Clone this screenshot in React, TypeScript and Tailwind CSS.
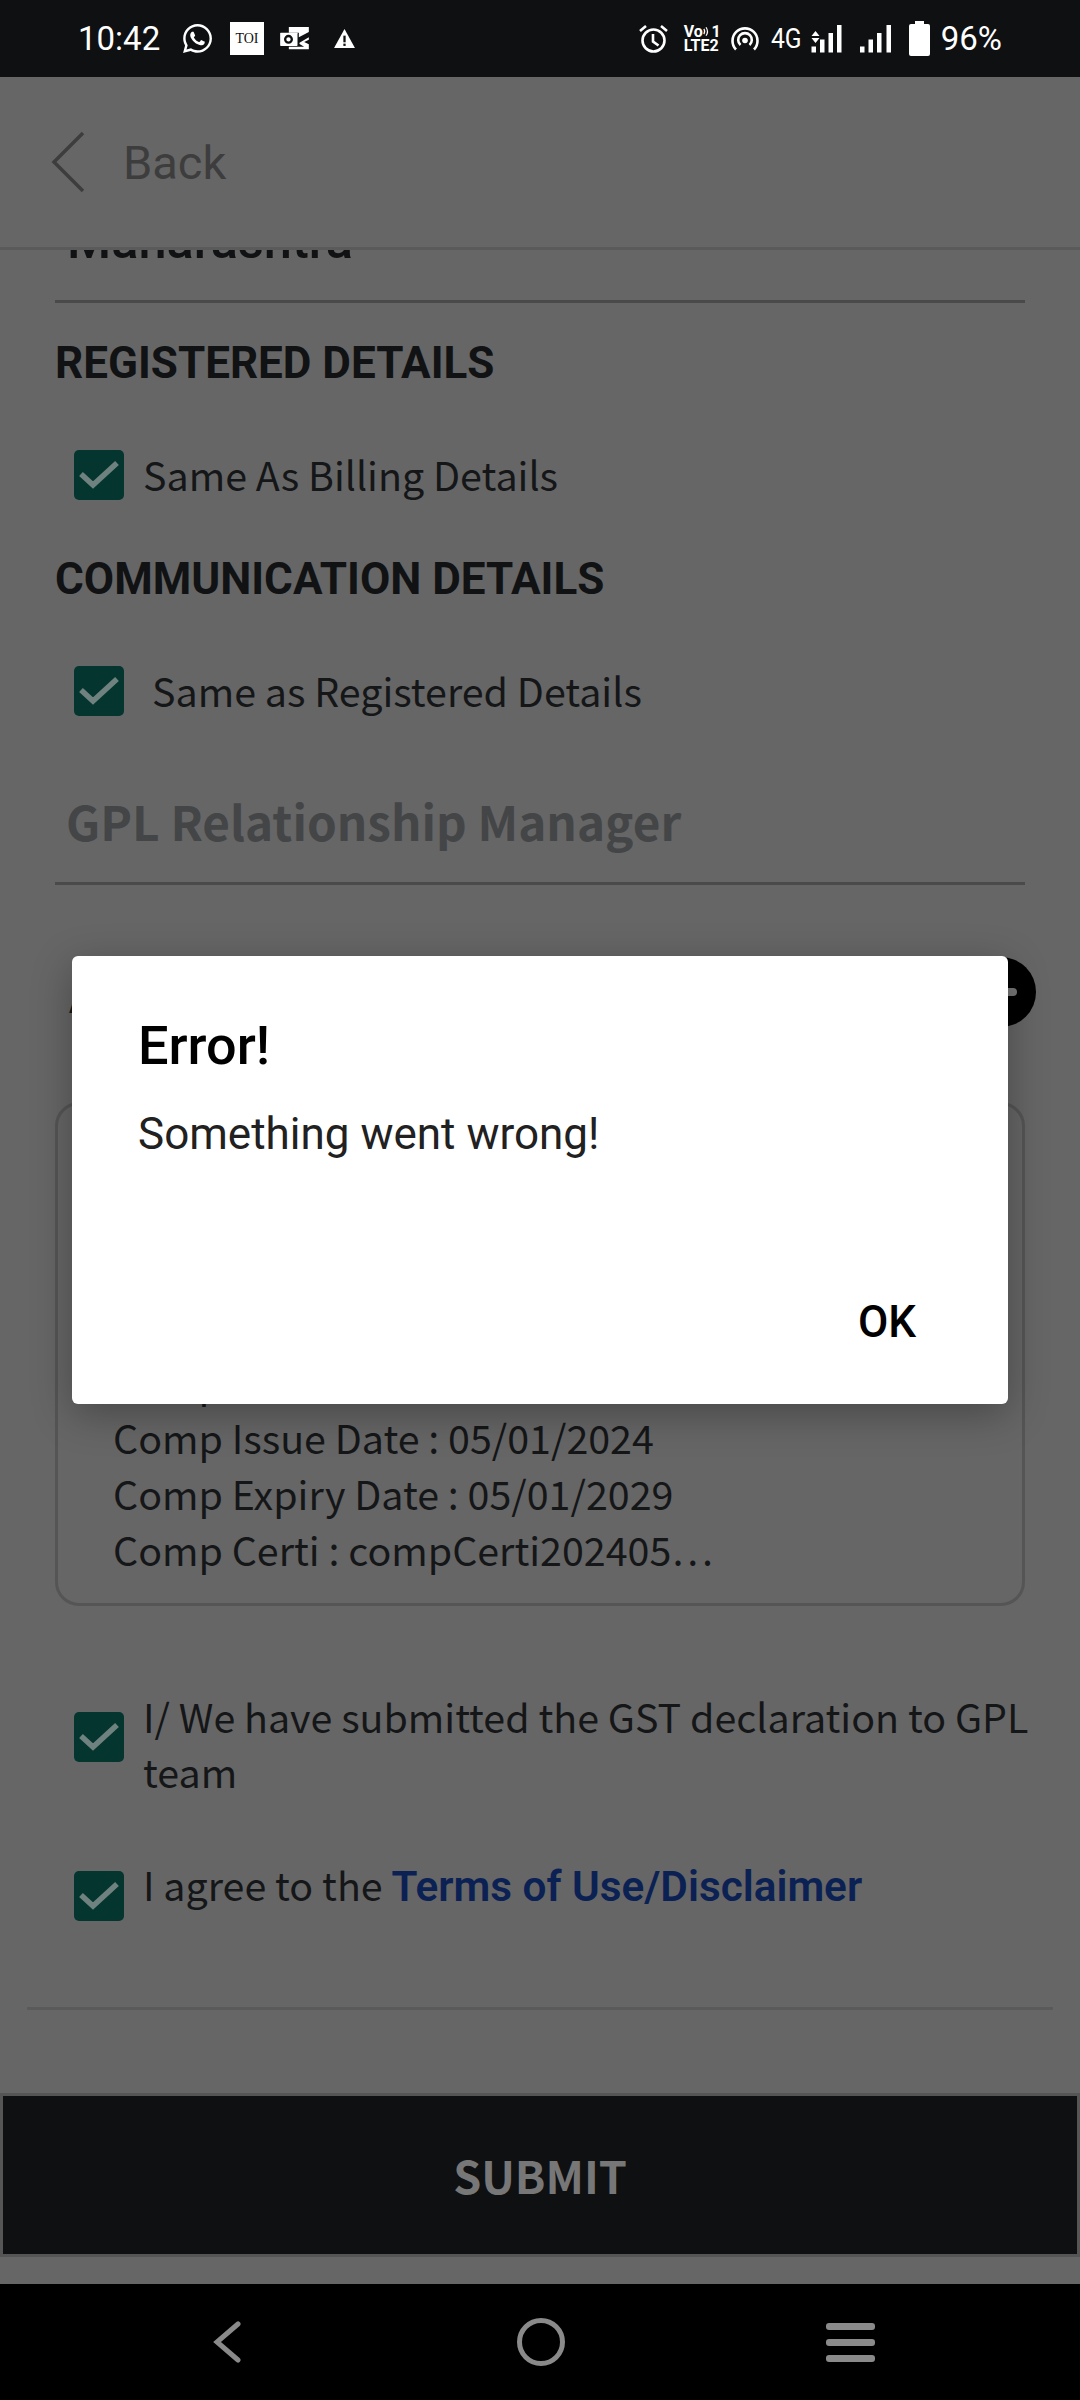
import React from "react";
import { FaWhatsapp } from "react-icons/fa";

const cjk = "font-['Noto_Sans_CJK_SC','Noto_Sans',sans-serif]";
const roboto = "font-['Roboto',sans-serif]";

const Checkbox: React.FC<{ className?: string }> = ({ className = "" }) => (
  <div className={`w-[50px] h-[50px] shrink-0 rounded-[5px] bg-[#04352f] ${className}`}>
    <svg viewBox="0 0 50 50" className="w-[50px] h-[50px]" fill="none" stroke="#6f827f" strokeWidth="5.5">
      <path d="M7 24 L19 35 L43 13" />
    </svg>
  </div>
);

const SignalBars: React.FC<{ arrows?: boolean }> = ({ arrows }) => (
  <svg viewBox="0 0 32 28" className="w-[32px] h-[28px]" fill="white">
    {arrows && <path d="M1.5 11 L5.5 6 L9.5 11 Z M1.5 13 H9.5 L5.5 18 Z" />}
    <rect x={arrows ? 1.5 : 0} y="21.5" width="4.5" height="6" />
    <rect x={arrows ? 10 : 8.5} y="14.5" width="4.5" height="13" />
    <rect x={arrows ? 18.5 : 17} y="8" width="4.5" height="19.5" />
    <rect x={arrows ? 27 : 26.5} y="0" width="4.5" height="27.5" />
  </svg>
);

const StatusBar = () => (
  <div className={`h-[77px] bg-[#0f1012] flex items-center justify-between pl-[78px] pr-[78px] text-white ${roboto}`}>
    <div className="flex items-center">
      <span className="w-[103px] text-[33px] leading-none">10:42</span>
      <FaWhatsapp className="w-[33px] h-[33px] mr-[16px]" />
      <div className="w-[34px] h-[33px] bg-white text-[#111] text-[14px] font-['Liberation_Serif',serif] flex items-center justify-center mr-[16px]">TOI</div>
      <svg viewBox="0 0 95 75" className="w-[32px] h-[25px] mr-[22px]" fill="white">
        <path d="M26 3 H86 V18 L56 34 V20 H26 Z" />
        <path d="M58 50 L86 34 V41 L72 48 L86 55 V70 H26 V62 H72 L58 54 Z" />
        <rect x="0" y="20" width="52" height="40" rx="2" />
        <circle cx="25" cy="40" r="10" fill="none" stroke="#0f1012" strokeWidth="7" />
      </svg>
      <svg viewBox="0 0 22 20" className="w-[21px] h-[19px]" fill="white">
        <path d="M11 0 L22 20 H0 Z" />
        <rect x="9.8" y="7" width="2.4" height="7" fill="#0f1012" />
        <rect x="9.8" y="15.4" width="2.4" height="2.4" fill="#0f1012" />
      </svg>
    </div>
    <div className="flex items-center">
      <svg viewBox="0 0 29 29" className="w-[29px] h-[29px] mr-[16px]" fill="none" stroke="white" strokeWidth="2.6">
        <circle cx="14.5" cy="16.5" r="11" />
        <path d="M14 10 V17.5 L19.5 21.5" />
        <path d="M1 7 L7 2 M28 7 L22 2" />
      </svg>
      <div className="w-[37px] h-[27px] mr-[10px] flex flex-col justify-between text-[16px] leading-[13px] font-bold">
        <div className="flex items-center">
          <span>Vo</span>
          <svg viewBox="0 0 9 14" className="w-[8px] h-[13px] mr-[1px]" fill="none" stroke="white" strokeWidth="1.4">
            <path d="M1 4 Q3 7 1 10 M3.5 2 Q7 7 3.5 12" />
          </svg>
          <span>1</span>
        </div>
        <span>LTE2</span>
      </div>
      <svg viewBox="0 0 28 24" className="w-[28px] h-[24px] mr-[12px]" fill="none" stroke="white" strokeWidth="2.6">
        <path d="M5 22.5 A12.5 12.5 0 1 1 23 22.5" />
        <path d="M9.5 18 A6.8 6.8 0 1 1 18.5 18" />
        <circle cx="14" cy="13.5" r="2.8" fill="white" stroke="none" />
      </svg>
      <span className="w-[30px] mr-[9px] text-[28px] leading-none scale-x-[0.88] origin-left">4G</span>
      <SignalBars arrows />
      <div className="w-[18px]" />
      <SignalBars />
      <div className="w-[17px]" />
      <svg viewBox="0 0 21 35" className="w-[21px] h-[35px] mr-[11px]" fill="white">
        <path d="M6 0 H15 V3 H19 A2 2 0 0 1 21 5 V33 A2 2 0 0 1 19 35 H2 A2 2 0 0 1 0 33 V5 A2 2 0 0 1 2 3 H6 Z" />
      </svg>
      <span className="text-[33px] leading-none">96%</span>
    </div>
  </div>
);

const Content = () => (
  <div className="relative h-[1790px] overflow-hidden">
    {/* page scrolled, first row is cut by the header */}
    <div className="px-[55px]">
      <div className="flex h-[53px] border-b-[3px] border-[#4a4a4a] pl-[12px]">
        <div className={`-mt-[35px] text-[50.5px] leading-[52px] font-medium text-[#111214] ${roboto}`}>Maharashtra</div>
      </div>
      <h2 className={`mt-[35px] text-[44px] leading-[50px] font-bold text-[#111214] ${roboto}`}>REGISTERED DETAILS</h2>
      <div className="mt-[62px] ml-[19px] flex items-center gap-[19px]">
        <Checkbox />
        <span className={`-mt-[3px] text-[39.4px] leading-[50px] text-[#151618] ${cjk}`}>Same As Billing Details</span>
      </div>
      <h2 className={`mt-[54px] text-[44px] leading-[50px] font-bold text-[#111214] ${roboto}`}>COMMUNICATION DETAILS</h2>
      <div className="mt-[62px] ml-[19px] flex items-center gap-[28px]">
        <Checkbox />
        <span className={`-mt-[3px] text-[39.4px] leading-[50px] text-[#151618] ${cjk}`}>Same as Registered Details</span>
      </div>
      <div className="mt-[72px] h-[97px] border-b-[3px] border-[#4a4a4a] pl-[11px]">
        <span className={`relative -top-[2px] text-[47.7px] leading-[70px] font-semibold text-[#444547] ${cjk}`}>GPL Relationship Manager</span>
      </div>
      <div className="relative mt-[72px] h-[100px] pl-[14px] pt-[4px]">
        <span className={`text-[39.4px] leading-[70px] text-[#151618] ${cjk}`}>Attach</span>
        <div className="absolute right-[-11px] top-0 w-[70px] h-[70px] rounded-full bg-black">
          <div className="absolute right-[19px] top-[31px] w-[24px] h-[8px] rounded-full bg-[#777]" />
        </div>
      </div>
      <div className={`mt-[45px] h-[504px] rounded-[24px] border-[3px] border-[#555555] pl-[55px] pb-[26px] flex flex-col justify-end text-[39.4px] leading-[56px] text-[#151618] ${cjk}`}>
        <div>Comp No : 2024</div>
        <div>Comp Issue Date : 05/01/2024</div>
        <div>Comp Expiry Date : 05/01/2029</div>
        <div>Comp Certi : compCerti202405…</div>
      </div>
    </div>
    <div className={`mt-[85px] pl-[74px] pr-[4px] text-[39.4px] leading-[55px] text-[#151618] ${cjk}`}>
      <div className="flex gap-[19px]">
        <Checkbox className="mt-[21px]" />
        <span className="-mt-[3px]">I/ We have submitted the GST declaration to GPL team</span>
      </div>
      <div className="mt-[61px] flex gap-[19px]">
        <Checkbox className="mt-[12px]" />
        <span className="-mt-[3px]">
          I agree to the <span className={`text-[42.3px] font-semibold text-[#0b2154] ${roboto}`}>Terms of Use/Disclaimer</span>
        </span>
      </div>
    </div>
    <div className="mx-[27px] mt-[86px] h-[3px] bg-[#5a5a5a]" />
  </div>
);

export default function App() {
  return (
    <div className="relative w-[1080px] h-[2400px] overflow-hidden bg-[#666666]">
      <StatusBar />
      <div className="relative z-10 h-[173px] bg-[#666666] border-b-[3px] border-[#5a5a5a] flex items-center pl-[51px]">
        <svg viewBox="0 0 34 62" className="w-[34px] h-[62px]" fill="none" stroke="#3d3d3d" strokeWidth="3.5">
          <path d="M32 2 L3 31 L32 60" />
        </svg>
        <span className={`ml-[38px] text-[47px] leading-none text-[#3d3d3d] ${roboto}`}>Back</span>
      </div>
      <Content />

      {/* submit + nav sit at the bottom of the window */}
      <div className="absolute left-0 right-0 bottom-0">
        <div className={`h-[164px] border-[3px] border-[#555555] bg-[#0f1012] flex items-center justify-center text-[45px] font-bold text-[#777777] ${cjk}`}>SUBMIT</div>
        <div className="mt-[27px] h-[116px] bg-black flex items-center">
          <svg viewBox="0 0 28 42" className="ml-[213px] w-[28px] h-[42px]" fill="none" stroke="#8a8a8a" strokeWidth="5" strokeLinecap="round">
            <path d="M25 3 L4 21 L25 39" />
          </svg>
          <div className="ml-[276px] w-[48px] h-[48px] rounded-full border-[5px] border-[#8a8a8a]" />
          <svg viewBox="0 0 49 39" className="ml-[261px] w-[49px] h-[39px]" fill="#8a8a8a">
            <rect x="0" y="0" width="49" height="7" rx="3" />
            <rect x="0" y="16" width="49" height="7" rx="3" />
            <rect x="0" y="32" width="49" height="7" rx="3" />
          </svg>
        </div>
      </div>

      {/* error dialog */}
      <div className={`absolute z-20 left-[72px] top-[956px] w-[936px] h-[448px] rounded-[6px] bg-white shadow-[0_10px_40px_rgba(0,0,0,0.3)] pl-[66px] pt-[60px] ${roboto}`}>
        <h3 className="text-[54px] leading-[60px] font-medium text-black">Error!</h3>
        <p className="mt-[30px] text-[44px] leading-[56px] text-[#212121]">Something went wrong!</p>
        <button className="absolute right-[92px] top-[341px] text-[44px] leading-[50px] font-medium text-black">OK</button>
      </div>
    </div>
  );
}
